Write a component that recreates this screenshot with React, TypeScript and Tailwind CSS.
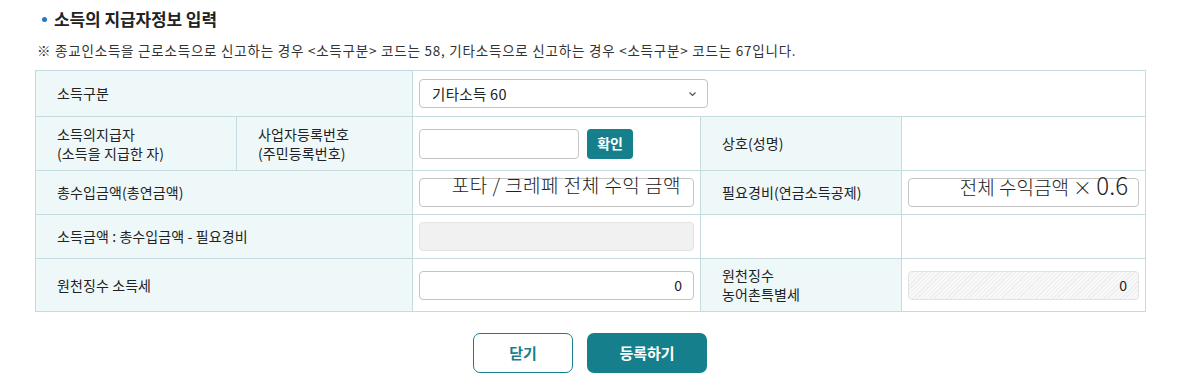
import React from "react";

const F = { fontFamily: '"Noto Sans CJK KR", "Noto Sans", sans-serif' };

const th = "border border-[#c6dbe0] bg-[#eff8f9] text-left align-middle text-[14px] text-[#222] font-normal pl-[21px] leading-[19px] tracking-[0.1px]";
const td = "border border-[#c6dbe0] bg-white align-middle px-[6px]";
const inputBase = "h-[29px] rounded-[4px] border border-[#c4c4c4] bg-white";

export default function App() {
  return (
    <div className="w-[1198px] h-[374px] bg-white text-[#222]" style={F}>
      <div className="pl-[37px] pt-[6px]">
        <div className="flex items-center h-[26px]">
          <span className="w-[5px] h-[5px] rounded-full bg-[#2a74c4] ml-[5px] mr-[7px]" />
          <span className="text-[17px] font-bold tracking-[-0.1px]">소득의 지급자정보 입력</span>
        </div>
        <div className="mt-[9px] text-[13.5px] tracking-[0.78px] text-[#333] leading-[18px]">
          ※ 종교인소득을 근로소득으로 신고하는 경우 &lt;소득구분&gt; 코드는 58, 기타소득으로 신고하는 경우 &lt;소득구분&gt; 코드는 67입니다.
        </div>
      </div>
      <table className="ml-[35px] mt-[11px] border-collapse table-fixed w-[1110px]">
        <colgroup>
          <col className="w-[201px]" />
          <col className="w-[176px]" />
          <col className="w-[288px]" />
          <col className="w-[201px]" />
          <col className="w-[244px]" />
        </colgroup>
        <tbody>
          <tr className="h-[46px]">
            <th colSpan={2} className={th}>소득구분</th>
            <td colSpan={3} className={td}>
              <div className={`${inputBase} w-[289px] h-[28px] flex items-center justify-between pl-[12px] pr-[10px] text-[14.5px] tracking-[0.3px]`}>
                <span>기타소득 60</span>
                <svg width="9" height="6" viewBox="0 0 9 6" fill="none">
                  <path d="M1.5 1.5L4.5 4.5L7.5 1.5" stroke="#555" strokeWidth="1.2" />
                </svg>
              </div>
            </td>
          </tr>
          <tr className="h-[54px]">
            <th className={th}>소득의지급자<br />(소득을 지급한 자)</th>
            <th className={th}>사업자등록번호<br />(주민등록번호)</th>
            <td className={td}>
              <div className="flex items-center gap-[8px]">
                <div className={`${inputBase} w-[160px] h-[30px]`} />
                <button className="h-[30px] w-[46px] rounded-[4px] bg-[#15808b] text-white text-[14px] font-bold">확인</button>
              </div>
            </td>
            <th className={th}>상호(성명)</th>
            <td className={td}></td>
          </tr>
          <tr className="h-[44px]">
            <th colSpan={2} className={th}>총수입금액(총연금액)</th>
            <td className={td}>
              <div className={`${inputBase} w-[275px] flex items-start justify-end pr-[12px] overflow-visible`}>
                <span className="text-[19px] leading-[19px] -mt-[4px] text-[#222] tracking-[0.5px] font-light">포타 / 크레페 전체 수익 금액</span>
              </div>
            </td>
            <th className={th}>필요경비(연금소득공제)</th>
            <td className={td}>
              <div className={`${inputBase} w-[231px] flex items-start justify-end pr-[10px]`}>
                <span className="text-[19px] leading-[22px] -mt-[5px] text-[#222] font-light">전체 수익금액 × <span className="text-[24px]">0.6</span></span>
              </div>
            </td>
          </tr>
          <tr className="h-[44px]">
            <th colSpan={2} className={th}>소득금액 : 총수입금액 - 필요경비</th>
            <td className={td}>
              <div className="h-[29px] w-[275px] rounded-[4px] border border-[#e4e4e4] bg-[#f1f1f1]" />
            </td>
            <td className={td}></td>
            <td className={td}></td>
          </tr>
          <tr className="h-[53px]">
            <th colSpan={2} className={th}>원천징수 소득세</th>
            <td className={td}>
              <div className={`${inputBase} w-[275px] flex items-center justify-end pr-[11px] text-[14px]`}>0</div>
            </td>
            <th className={th}>원천징수<br />농어촌특별세</th>
            <td className={td}>
              <div className="h-[29px] w-[231px] rounded-[4px] border border-[#e2e2e2] bg-[image:repeating-linear-gradient(-45deg,#eeeeee_0px,#eeeeee_1px,#f8f8f8_1px,#f8f8f8_3px)] flex items-center justify-end pr-[11px] text-[14px]">0</div>
            </td>
          </tr>
        </tbody>
      </table>
      <div className="flex justify-center gap-[14px] mt-[21px] pr-[18px]">
        <button className="w-[100px] h-[40px] rounded-[7px] border border-[#15808b] bg-white text-[#15808b] text-[15px] font-bold">닫기</button>
        <button className="w-[120px] h-[40px] rounded-[7px] bg-[#15808b] text-white text-[15px] font-bold">등록하기</button>
      </div>
    </div>
  );
}
